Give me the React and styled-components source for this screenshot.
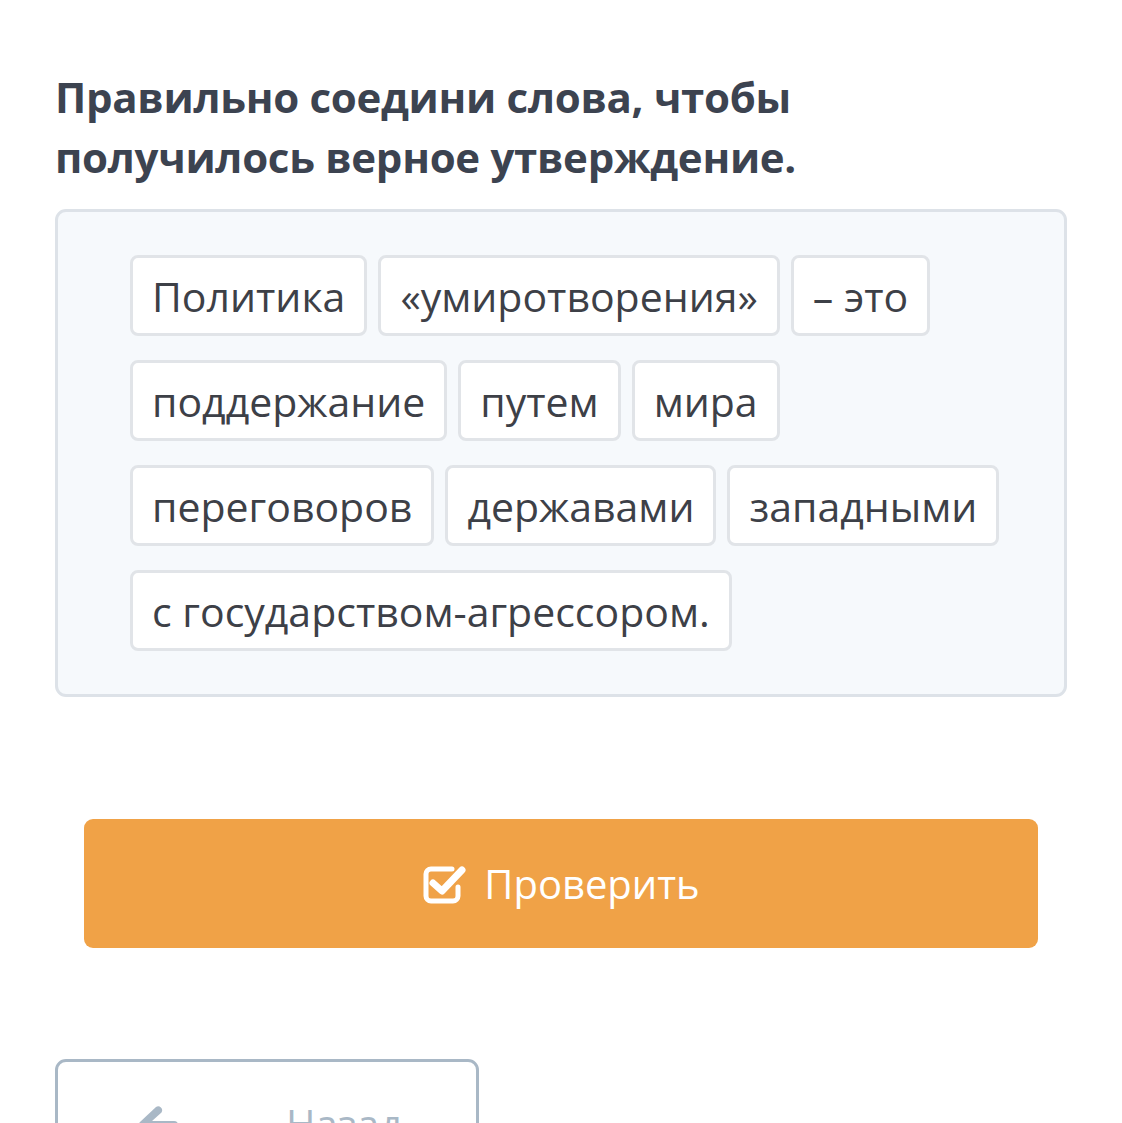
import React from "react";
import styled, { createGlobalStyle } from "styled-components";

const Global = createGlobalStyle`
  html, body { margin: 0; padding: 0; background: #ffffff; }
  body { font-family: "Open Sans", "Noto Sans", sans-serif; }
`;

const Page = styled.div`
  padding: 67px 55px 0 55px;
  display: flex;
  flex-direction: column;
`;

const Title = styled.h1`
  margin: 0 0 22px 0;
  font-size: 42px;
  line-height: 60px;
  font-weight: 700;
  color: #3c4350;
  letter-spacing: -0.3px;
`;

const Board = styled.div`
  box-sizing: border-box;
  width: 1012px;
  background: #f6f9fc;
  border: 3px solid #dde2e8;
  border-radius: 11px;
  padding: 43px 40px 43px 72px;
  display: flex;
  flex-wrap: wrap;
  gap: 24px 11px;
`;

const Chip = styled.div`
  box-sizing: border-box;
  height: 81px;
  background: #ffffff;
  border: 3px solid #e1e4e8;
  border-radius: 8px;
  padding: 0 19px;
  display: flex;
  align-items: center;
  font-size: 41px;
  color: #3d4047;
  white-space: nowrap;
`;

const CheckButton = styled.button`
  box-sizing: border-box;
  margin: 122px 29px 0 29px;
  height: 129px;
  border: none;
  border-radius: 9px;
  background: #f0a247;
  color: #ffffff;
  font-family: "Open Sans", "Noto Sans", sans-serif;
  font-size: 40px;
  display: flex;
  align-items: center;
  justify-content: center;
  gap: 16px;
  padding: 0;
`;

const BackButton = styled.button`
  box-sizing: border-box;
  margin-top: 111px;
  width: 424px;
  height: 129px;
  border: 3px solid #a9b8c6;
  border-radius: 11px;
  background: #ffffff;
  color: #a9b8c6;
  font-family: "Open Sans", "Noto Sans", sans-serif;
  font-size: 40px;
  display: flex;
  align-items: center;
  padding: 0 0 0 78px;
  gap: 106px;
`;

const CheckIcon = () => (
  <svg width="46" height="42" viewBox="0 0 46 42" fill="none">
    <path
      d="M30 6 H9 A5 5 0 0 0 4 11 V33 A5 5 0 0 0 9 38 H31 A5 5 0 0 0 36 33 V24"
      stroke="#ffffff"
      strokeWidth="5"
      strokeLinecap="round"
      fill="none"
    />
    <path
      d="M11 20 L20 28 L40 7"
      stroke="#ffffff"
      strokeWidth="7"
      strokeLinecap="round"
      strokeLinejoin="round"
      fill="none"
    />
  </svg>
);

const ArrowIcon = () => (
  <svg width="44" height="40" viewBox="0 0 44 40" fill="#a9b8c6">
    <path d="M20 3 a4 4 0 0 1 5.5 5.5 L16 17 H38 a4 4 0 0 1 0 8 H16 L25.5 33.5 a4 4 0 0 1 -5.5 5.5 L4 24 a4 4 0 0 1 0 -6 Z" />
  </svg>
);

const words = [
  "Политика",
  "«умиротворения»",
  "– это",
  "поддержание",
  "путем",
  "мира",
  "переговоров",
  "державами",
  "западными",
  "с государством-агрессором.",
];

export default function App() {
  return (
    <>
      <Global />
      <Page>
        <Title>
          Правильно соедини слова, чтобы
          <br />
          получилось верное утверждение.
        </Title>
        <Board>
          {words.map((w, i) => (
            <Chip key={i}>{w}</Chip>
          ))}
        </Board>
        <CheckButton>
          <CheckIcon />
          Проверить
        </CheckButton>
        <BackButton>
          <ArrowIcon />
          Назад
        </BackButton>
      </Page>
    </>
  );
}
